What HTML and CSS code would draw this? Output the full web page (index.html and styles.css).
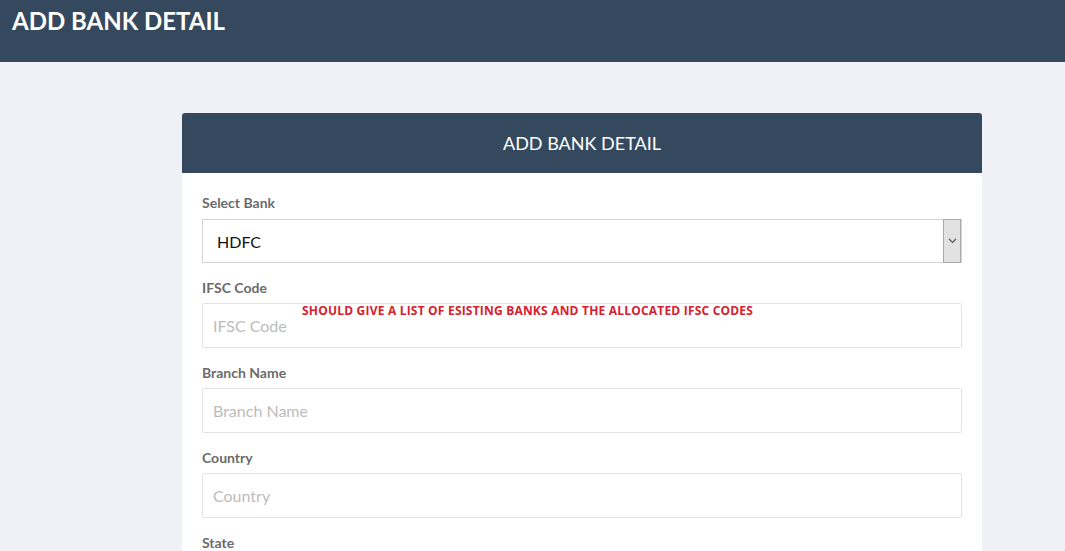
FILE: index.html
```html
<!DOCTYPE html>
<html>
<head>
<meta charset="utf-8">
<link rel="stylesheet" href="styles.css">
</head>
<body>
<header class="topbar">
  <h1 class="page-title">ADD BANK DETAIL</h1>
</header>
<main class="content">
  <section class="card">
    <div class="card-head">ADD BANK DETAIL</div>
    <form class="card-body">
      <div class="group">
        <label class="label">Select Bank</label>
        <div class="select">
          <span class="select-value">HDFC</span>
          <span class="select-btn">
            <svg width="9" height="6" viewBox="0 0 9 6"><path d="M1 1 L4.5 4.5 L8 1" fill="none" stroke="#555" stroke-width="1.2"/></svg>
          </span>
        </div>
      </div>
      <div class="group">
        <label class="label">IFSC Code</label>
        <div class="field-wrap">
          <input class="input" placeholder="IFSC Code">
          <span class="note">SHOULD GIVE A LIST OF ESISTING BANKS AND THE ALLOCATED IFSC CODES</span>
        </div>
      </div>
      <div class="group">
        <label class="label">Branch Name</label>
        <input class="input" placeholder="Branch Name">
      </div>
      <div class="group">
        <label class="label">Country</label>
        <input class="input" placeholder="Country">
      </div>
      <div class="group">
        <label class="label">State</label>
        <input class="input" placeholder="State">
      </div>
    </form>
  </section>
</main>
</body>
</html>
```
FILE: styles.css
```css
* { box-sizing: border-box; }
html, body { margin: 0; padding: 0; }
body {
  background: #f0f1f6;
  font-family: Lato, "Noto Sans", sans-serif;
  overflow: hidden;
  height: 551px;
}
.topbar {
  background: #35495e;
  height: 62px;
  padding: 7px 12px 0;
}
.page-title {
  margin: 0;
  color: #fff;
  font-size: 24px;
  font-weight: 700;
  line-height: 28px;
}
.content {
  padding: 51px 83px 0 182px;
}
.card {
  width: 800px;
  background: #fff;
  border-radius: 3px 3px 0 0;
}
.card-head {
  height: 60px;
  background: #35495e;
  border-radius: 3px 3px 0 0;
  color: #fff;
  font-size: 18px;
  line-height: 60px;
  text-align: center;
}
.card-body {
  padding: 20px 20px 0;
  display: flex;
  flex-direction: column;
}
.group {
  display: flex;
  flex-direction: column;
  margin-bottom: 15px;
}
.label {
  color: #6b6b6b;
  font-size: 14px;
  font-weight: 700;
  line-height: 20px;
  margin-bottom: 5px;
}
.select {
  height: 44px;
  margin-top: 1px;
  border: 1px solid #d4d4d4;
  display: flex;
  align-items: center;
  justify-content: space-between;
}
.select-value {
  padding-left: 14px;
  font-size: 16px;
  color: #111;
}
.select-btn {
  width: 18px;
  height: 44px;
  margin-top: -1px;
  margin-bottom: -1px;
  background: #e2e2e2;
  border: 1px solid #a9a9a9;
  display: flex;
  align-items: center;
  justify-content: center;
}
.field-wrap { position: relative; }
.input {
  display: block;
  width: 100%;
  height: 45px;
  border: 1px solid #e3e3e3;
  border-radius: 2px;
  padding: 0 10px;
  font-family: Lato, "Noto Sans", sans-serif;
  font-size: 16px;
  color: #333;
  outline: none;
}
.input::placeholder { color: #bcbcbc; }
.note {
  position: absolute;
  left: 100px;
  top: 0;
  color: #d7202e;
  font-family: "Open Sans", sans-serif;
  font-weight: 700;
  font-size: 12px;
  letter-spacing: 0.2px;
  white-space: nowrap;
  line-height: 16px;
}
```
